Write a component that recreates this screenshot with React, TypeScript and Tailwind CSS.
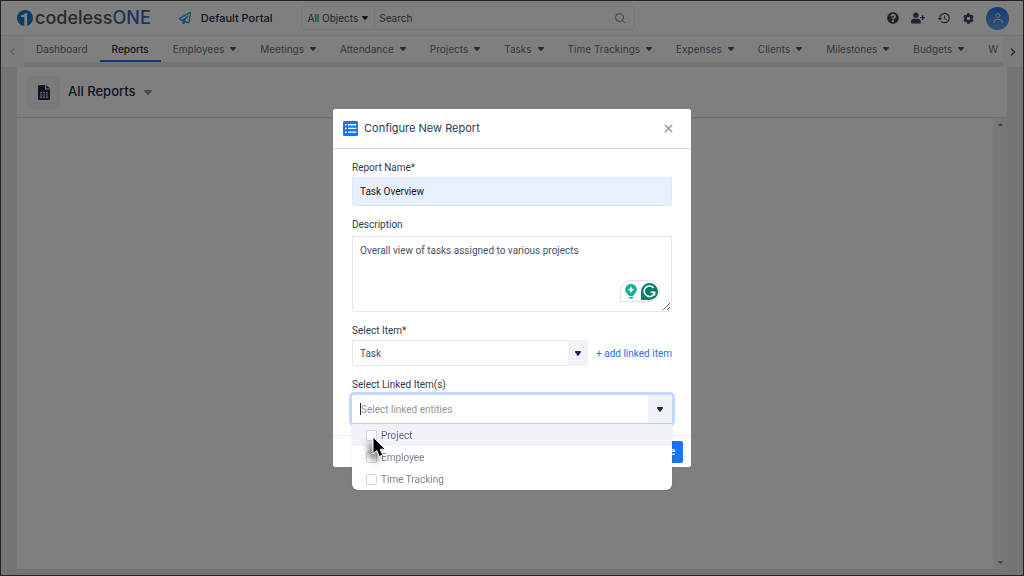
import React, { useState } from 'react';
import { ChevronLeft, ChevronRight, Search, X } from 'lucide-react';
import { FaCog, FaQuestionCircle, FaRegPaperPlane, FaUserPlus } from 'react-icons/fa';
import { MdHistory } from 'react-icons/md';
import { FiUser } from 'react-icons/fi';

interface NavItem {
  label: string;
  menu?: boolean;
}

const navItems: NavItem[] = [
  { label: 'Dashboard' },
  { label: 'Reports' },
  { label: 'Employees', menu: true },
  { label: 'Meetings', menu: true },
  { label: 'Attendance', menu: true },
  { label: 'Projects', menu: true },
  { label: 'Tasks', menu: true },
  { label: 'Time Trackings', menu: true },
  { label: 'Expenses', menu: true },
  { label: 'Clients', menu: true },
  { label: 'Milestones', menu: true },
  { label: 'Budgets', menu: true },
  { label: 'W' },
];

const linkedItems = ['Project', 'Employee', 'Time Tracking'];

const Caret = ({ className = '' }: { className?: string }) => (
  <svg viewBox="0 0 8 5" preserveAspectRatio="none" className={`shrink-0 fill-current ${className}`} aria-hidden="true">
    <path d="M.8 0h6.4c.7 0 1 .7.6 1.200L4.600 4.700a.8.8 0 0 1-1.200 0L.2 1.200C-.2.700.1 0 .8 0z" />
  </svg>
);

const Logo = () => (
  <a href="#home" className="flex items-center gap-0.5 text-[18px] leading-none">
    <svg viewBox="0 0 16 16" className="size-4 shrink-0" aria-hidden="true">
      <circle cx="8" cy="8" r="8" fill="#1478c8" />
      <path d="M4 5.300c1.900-.1 3-.8 3.500-2.100h2.700V14.600L9.500 16H7.300V7H4z" fill="#fff" />
    </svg>
    <span className="font-medium text-[#555555]">
      codeless<span className="text-[#3c64b4]">ONE</span>
    </span>
  </a>
);

const Header = () => (
  <header className="flex h-[35px] items-center border-b border-[#e0e0e0] bg-white pr-3.5 pl-4">
    <Logo />
    <a href="#portal" className="ml-7 flex items-center gap-2.5 text-[11px] font-medium text-[#1f2a44]">
      <FaRegPaperPlane className="text-[#0a8fd0]" size={12} />
      Default Portal
    </a>
    <form className="ml-7 flex h-6 w-[334px] items-center rounded-sm border border-[#ececec]">
      <button type="button" className="flex h-full items-center gap-1 border-r border-[#ececec] px-1.5 text-[10px] whitespace-nowrap text-[#3d475c]">
        All Objects
        <Caret className="h-1 w-1.5 text-[#1f2a44]" />
      </button>
      <input
        type="search"
        aria-label="Search"
        placeholder="Search"
        className="min-w-0 flex-1 px-1 text-[10px] outline-none placeholder:text-[#4b5568]"
      />
      <button type="submit" aria-label="Run search" className="pr-2 text-[#7a8190]">
        <Search size={12} />
      </button>
    </form>
    <div className="ml-auto flex items-center gap-3 text-[#3d475c]">
      <button aria-label="Help"><FaQuestionCircle size={12} /></button>
      <button aria-label="Invite user"><FaUserPlus size={14} /></button>
      <button aria-label="History"><MdHistory size={14} /></button>
      <button aria-label="Settings"><FaCog size={11} /></button>
      <button aria-label="Account" className="flex size-[23px] items-center justify-center rounded-full bg-linear-to-b from-[#1f78e8] to-[#6aa5ee] text-[#dce8f8]">
        <FiUser size={12} />
      </button>
    </div>
  </header>
);

const Nav = () => (
  <nav className="flex h-[31px] items-stretch bg-[#f8f9fb]">
    <button aria-label="Scroll left" className="flex w-[23px] shrink-0 items-center justify-center text-[#8a8f9a]">
      <ChevronLeft size={11} />
    </button>
    <div className="flex min-w-0 flex-1 overflow-hidden border-b-[5px] border-[#e6e9ef] bg-white">
      {navItems.map((item) => (
        <a
          key={item.label}
          href={`#${item.label.toLowerCase()}`}
          className={`flex shrink-0 items-center gap-1.5 border-b-2 px-3 pt-0.5 text-[10px] whitespace-nowrap last:pr-0 ${
            item.label === 'Reports'
              ? 'border-[#1a73f0] font-medium text-[#1f2a44]'
              : 'border-transparent text-[#667085]'
          }`}
        >
          {item.label}
          {item.menu && <Caret className="h-1 w-1.5 text-[#4b5568]" />}
        </a>
      ))}
    </div>
    <button aria-label="Scroll right" className="flex w-5 shrink-0 items-center justify-center text-[#3d475c]">
      <ChevronRight size={12} strokeWidth={2.5} />
    </button>
  </nav>
);

const ReportsPanel = () => (
  <main className="mx-4 mb-1.5 flex flex-1 flex-col bg-white">
    <div className="flex h-[51px] items-center border-b border-[#dcdcdc] px-2.5">
      <div className="flex size-[33px] items-center justify-center rounded bg-[#f1f4f9]">
        <svg viewBox="0 0 12 15" className="h-[15px] w-3" aria-hidden="true">
          <path d="M1.500 0H7v4.500h5v9a1.500 1.500 0 0 1-1.500 1.500h-9A1.500 1.500 0 0 1 0 13.500v-12A1.500 1.500 0 0 1 1.500 0z" fill="#1b2747" />
          <path d="M8.200 0 12 3.500H8.200z" fill="#1b2747" />
          <path d="M2.200 7h1.800v1.300H2.200zm2.900 0h1.800v1.300H5.100zM8 7h1.800v1.300H8zM2.200 9.300h1.800v1.300H2.200zm2.900 0h1.800v1.300H5.100zm2.900 0h1.800v1.300H8zM2.200 11.600h1.800v1.300H2.200zm2.900 0h1.800v1.300H5.100zm2.900 0h1.800v1.300H8z" fill="#dfe4ee" />
        </svg>
      </div>
      <h1 className="ml-2 text-[13px] font-medium text-[#1f2a44]">All Reports</h1>
      <button aria-label="Switch report list" className="ml-2">
        <Caret className="h-[5px] w-2 text-[#8d94a1]" />
      </button>
    </div>
    <div className="flex flex-1 justify-end">
      <div className="flex w-3.5 flex-col items-center justify-between bg-[#f1f1f1] py-[5px] text-[#8a8a8a]">
        <Caret className="h-[3px] w-[5px] rotate-180" />
        <Caret className="h-[3px] w-[5px]" />
      </div>
    </div>
  </main>
);

const WritingAssistant = () => (
  <div className="absolute right-3 bottom-2.5 flex h-[22px] items-center gap-1 rounded-full rounded-bl-none border border-[#dfe1ea] bg-white pr-px pl-1">
    <svg viewBox="0 0 12 15" className="h-[15px] w-3" aria-hidden="true">
      <path d="M6 0a5.800 5.800 0 0 1 3.200 10.600c-.5.400-.9.700-1.100 1.400H3.900c-.2-.700-.6-1-1.100-1.400A5.800 5.800 0 0 1 6 0z" fill="#12b392" />
      <path d="M3.600 13h4.800c-.2 1.200-.9 1.800-2.400 1.800S3.800 14.200 3.600 13z" fill="#12b392" />
      <path d="M6 2.700c.3 1.900 1 2.700 2.900 3-1.900.300-2.600 1.100-2.900 3-.3-1.900-1-2.700-2.900-3 1.900-.3 2.600-1.100 2.900-3z" fill="#fff" stroke="#fff" strokeWidth=".5" />
    </svg>
    <svg viewBox="0 0 17 17" className="size-[17px]" aria-hidden="true">
      <path d="M8.500 0a8.500 8.500 0 1 1 0 17H0V8.500A8.500 8.500 0 0 1 8.500 0z" fill="#077c6b" />
      <path d="M12.600 4.900A5.300 5.300 0 1 0 13.700 9.200H9.700M13.500 9.200v3.200" fill="none" stroke="#fff" strokeWidth="1.600" />
    </svg>
  </div>
);

const MousePointer = () => (
  <svg viewBox="0 0 14 22" className="pointer-events-none absolute top-3 left-5 h-[22px] w-3.5 overflow-visible drop-shadow-[-4px_5px_3px_rgba(0,0,0,0.5)]" aria-hidden="true">
    <path d="M1 1v17l3.800-3.500 2.500 6 3.400-1.400-2.500-5.800H13.500z" fill="#000" stroke="#fff" strokeWidth="1" />
  </svg>
);

const LinkedItemsMenu = () => {
  const [checked, setChecked] = useState<string[]>([]);

  const toggle = (name: string) =>
    setChecked((prev) => (prev.includes(name) ? prev.filter((n) => n !== name) : [...prev, name]));

  return (
    <div className="absolute inset-x-0 top-full mt-px rounded-b-md bg-white shadow-[0_0_1px_rgba(0,0,0,0.4)]">
      {linkedItems.map((name, i) => (
        <label
          key={name}
          className={`flex h-[22px] items-center gap-1 pl-3.5 last:rounded-b-md ${
            i === 0 ? 'bg-[#f1f2f7] text-[#667085]' : 'text-[#7b8494]'
          }`}
        >
          <input
            type="checkbox"
            checked={checked.includes(name)}
            onChange={() => toggle(name)}
            className="size-[11px] appearance-none rounded-xs border border-[#d3d7df] bg-white checked:bg-[#1a73f0]"
          />
          {name}
        </label>
      ))}
      <MousePointer />
    </div>
  );
};

const ConfigureReportDialog = () => {
  const [name, setName] = useState('Task Overview');
  const [description, setDescription] = useState('Overall view of tasks assigned to various projects');

  return (
    <div role="dialog" aria-labelledby="dialog-title" className="w-[358px] rounded-xs bg-white font-['Roboto',sans-serif] text-[10px] text-[#2c3a52]">
      <div className="flex h-10 items-center border-b border-[#dcdfe8] pr-4 pl-2.5">
        <svg viewBox="0 0 15 15" className="size-[15px]" aria-hidden="true">
          <rect width="15" height="15" rx="1.500" fill="#1a73f0" />
          <path d="M2 3h1.600v1.600H2zm0 3.700h1.600v1.600H2zm0 3.700h1.600V12H2zM5 3.100h8.300v1.300H5zm0 3.700h8.300v1.300H5zm0 3.700h8.300v1.300H5z" fill="#fff" />
        </svg>
        <h2 id="dialog-title" className="ml-1.5 font-['Inter',sans-serif] text-[11px]">Configure New Report</h2>
        <button aria-label="Close" className="ml-auto text-[#8d94a6]">
          <X size={13} strokeWidth={2.5} />
        </button>
      </div>

      <form className="px-[19px] pt-[11px] pb-3">
        <label htmlFor="report-name" className="block leading-4">Report Name*</label>
        <input
          id="report-name"
          value={name}
          onChange={(e) => setName(e.target.value)}
          className="mt-px block h-[29px] w-full rounded-xs border border-[#e2e8f4] bg-[#e8f0fe] px-[7px] text-[#111827] outline-none"
        />

        <label htmlFor="report-description" className="mt-[11px] block leading-4">Description</label>
        <div className="relative mt-[3px]">
          <textarea
            id="report-description"
            spellCheck={false}
            value={description}
            onChange={(e) => setDescription(e.target.value)}
            className="block h-19 w-full rounded-xs border border-[#e6e8ee] px-[7px] py-1.5 leading-4 text-[#465268] outline-none"
          />
          <WritingAssistant />
        </div>

        <label htmlFor="report-item" className="mt-[11px] block leading-4">Select Item*</label>
        <div className="mt-px flex items-center justify-between">
          <div className="relative w-[236px]">
            <select id="report-item" className="block h-[26px] w-full appearance-none rounded-xs border border-[#e6e8ee] bg-white px-[7px] text-[#465268] outline-none">
              <option>Task</option>
            </select>
            <span className="pointer-events-none absolute inset-y-0 right-0 flex w-5 items-center justify-center rounded-r-xs bg-[#f1f2f7]">
              <Caret className="h-[5px] w-1.5 text-[#1b2747]" />
            </span>
          </div>
          <a href="#add-linked-item" className="text-[#1a73f0]">+ add linked item</a>
        </div>

        <label htmlFor="linked-items" className="mt-[11px] block leading-4">Select Linked Item(s)</label>
        <div className="relative mt-[2px]">
          <div className="flex h-7 items-center rounded-xs bg-white pl-2 ring-[3px] ring-[#c3d9fc]">
            <span className="h-3 w-px bg-[#1b2747]" />
            <input
              id="linked-items"
              role="combobox"
              aria-expanded="true"
              aria-controls="linked-menu"
              placeholder="Select linked entities"
              className="min-w-0 flex-1 outline-none placeholder:text-[#949494]"
            />
            <button type="button" aria-label="Toggle linked items" className="flex h-full w-6 items-center justify-center bg-[#f1f2f7] text-[#1b2747]">
              <Caret className="h-[5px] w-1.5" />
            </button>
          </div>
          <div id="linked-menu">
            <LinkedItemsMenu />
          </div>
        </div>
      </form>

      <div className="flex h-8 items-center justify-end border-t border-[#eceef3] px-2">
        <button className="h-[22px] rounded-xs bg-[#1a73f0] px-2 font-medium text-white">Save</button>
      </div>
    </div>
  );
};

const App: React.FC = () => (
  <div className="flex min-h-screen flex-col border border-[#444444] bg-[#e6e9ef] font-['Inter',sans-serif]">
    <Header />
    <Nav />
    <ReportsPanel />
    <div className="fixed inset-0 flex items-center justify-center bg-black/50">
      <ConfigureReportDialog />
    </div>
  </div>
);

export default App;
